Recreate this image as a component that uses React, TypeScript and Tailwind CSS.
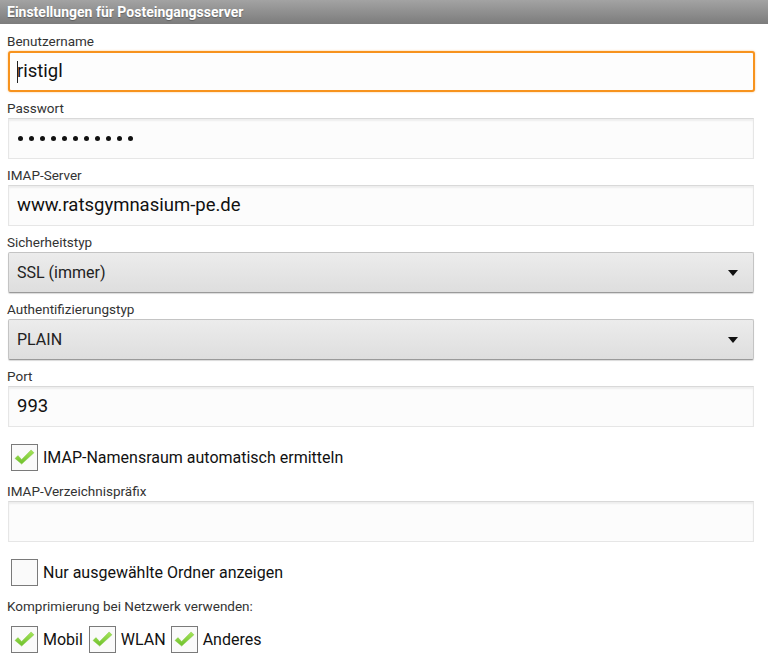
import React from 'react';

const font = { fontFamily: 'Roboto, "Noto Sans", sans-serif' };

const Label: React.FC<{ text: string; first?: boolean }> = ({ text, first }) => (
	<div className={`${first ? 'pt-[9px]' : 'pt-[8px]'} pb-[2px] pl-[7px] text-[13.5px] leading-4 text-[#333]`}>{text}</div>
);

const TextInput: React.FC<{ value?: string; focused?: boolean; password?: boolean }> = ({ value = '', focused, password }) => {
	if (focused) {
		return (
			<div className="mx-[8px] mr-[13px] h-[41px] rounded-[3px] border-2 border-[#f7931e] bg-[#fdfdfd] shadow-[0_0_2px_rgba(247,147,30,0.6)] flex items-center pl-[7px] text-[18.5px] text-[#111]">
				<span className="inline-block w-px h-[22px] bg-[#222] mr-[-1px]" />
				{value}
			</div>
		);
	}
	return (
		<div className="mx-[8px] mr-[14px] h-[41px] border border-[#e6e6e6] border-t-[#d9d9d9] bg-[#fcfcfc] shadow-[inset_0_2px_2px_rgba(0,0,0,0.06)] flex items-center pl-[8px] text-[18.5px] text-[#111]">
			{password ? (
				<span className="flex gap-[6px] pl-[1px]">
					{Array.from({ length: 11 }).map((_, i) => (
						<span key={i} className="w-[5px] h-[5px] rounded-full bg-[#111]" />
					))}
				</span>
			) : (
				value
			)}
		</div>
	);
};

const Select: React.FC<{ value: string }> = ({ value }) => (
	<div className="mx-[8px] mr-[14px] h-[41px] rounded-[2px] border border-[#c4c4c4] border-b-[#9a9a9a] bg-gradient-to-b from-[#ececec] to-[#dedede] shadow-[0_1px_1px_rgba(0,0,0,0.15)] flex items-center justify-between pl-[8px] pr-[15px] text-[16px] text-[#222]">
		<span>{value}</span>
		<svg width="10" height="6" viewBox="0 0 10 6">
			<polygon points="0,0 10,0 5,6" fill="#111" />
		</svg>
	</div>
);

const Check: React.FC<{ checked?: boolean }> = ({ checked }) => (
	<div className="w-[27px] h-[27px] border border-[#7a7a7a] bg-[#fafafa] flex items-center justify-center shrink-0">
		{checked && (
			<svg width="21" height="17" viewBox="0 0 22 18">
				<defs>
					<linearGradient id="chk" x1="0" y1="0" x2="0" y2="1">
						<stop offset="0" stopColor="#a6e55a" />
						<stop offset="1" stopColor="#6cbf2a" />
					</linearGradient>
				</defs>
				<path d="M1 10 L4 7 L8 11 L18 1 L21 4 L8 16 Z" fill="url(#chk)" stroke="#7cc63a" strokeWidth="0.5" strokeLinejoin="round" />
			</svg>
		)}
	</div>
);

const CheckRow: React.FC<{ text: string; checked?: boolean }> = ({ text, checked }) => (
	<div className="flex items-center gap-[5px] pl-[11px] mt-[17px]">
		<Check checked={checked} />
		<span className="text-[16px] text-[#111]">{text}</span>
	</div>
);

export default function App() {
	return (
		<div className="w-[768px] h-[668px] bg-white overflow-hidden" style={font}>
			<div className="h-[24px] bg-gradient-to-b from-[#a3a3a3] to-[#7c7c7c] flex items-center pl-[7px] text-[14px] font-bold text-white [text-shadow:0_1px_1px_rgba(0,0,0,0.3)]">
				Einstellungen für Posteingangsserver
			</div>

			<Label text="Benutzername" first />
			<TextInput value="ristigl" focused />

			<Label text="Passwort" />
			<TextInput password />

			<Label text="IMAP-Server" />
			<TextInput value="www.ratsgymnasium-pe.de" />

			<Label text="Sicherheitstyp" />
			<Select value="SSL (immer)" />

			<Label text="Authentifizierungstyp" />
			<Select value="PLAIN" />

			<Label text="Port" />
			<TextInput value="993" />

			<CheckRow text="IMAP-Namensraum automatisch ermitteln" checked />

			<div className="pt-[12px] pb-[2px] pl-[7px] text-[13.5px] leading-4 text-[#333]">IMAP-Verzeichnispräfix</div>
			<TextInput />

			<CheckRow text="Nur ausgewählte Ordner anzeigen" />

			<div className="pt-[12px] pl-[7px] text-[13.5px] leading-4 text-[#333]">Komprimierung bei Netzwerk verwenden:</div>

			<div className="flex items-center pl-[11px] mt-[12px]">
				<Check checked />
				<span className="ml-[5px] mr-[6px] text-[16px] text-[#111]">Mobil</span>
				<Check checked />
				<span className="ml-[5px] mr-[5px] text-[16px] text-[#111]">WLAN</span>
				<Check checked />
				<span className="ml-[5px] text-[16px] text-[#111]">Anderes</span>
			</div>
		</div>
	);
}
